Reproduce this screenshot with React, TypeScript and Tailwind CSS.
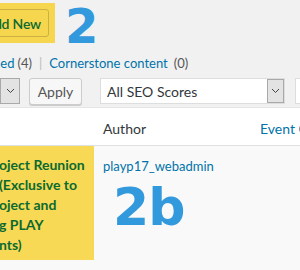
import React from "react";

const Chevron: React.FC = () => (
  <svg width="9" height="6" viewBox="0 0 9 6" fill="none">
    <path d="M1 1l3.5 3.5L8 1" stroke="#444" strokeWidth="1" />
  </svg>
);

const ArrowBox: React.FC<{ className?: string }> = ({ className }) => (
  <div
    className={
      "w-[17px] h-full bg-[#e3e3e3] border border-[#a9a9a9] flex items-center justify-center shrink-0 " +
      (className || "")
    }
  >
    <Chevron />
  </div>
);

const App: React.FC = () => {
  return (
    <div className="w-[300px] h-[270px] overflow-hidden bg-[#f1f1f1] font-['Lato',sans-serif] text-[#32373c]">
      {/* page title row */}
      <div className="flex items-start h-[46px]">
        <div className="mt-[3px] w-[55px] h-[40px] bg-[#f6d64e] flex items-center justify-end pr-[6px] overflow-hidden shrink-0">
          <div className="h-[28px] shrink-0 whitespace-nowrap border border-[#cdb042] rounded-[3px] pl-[8px] pr-[7px] flex items-center text-[14px] font-semibold text-[#0b6a30] tracking-[-0.2px]">
            Add New
          </div>
        </div>
        <div className="ml-[10px] mt-[2px] text-[48px] leading-none font-bold font-['DejaVu_Sans',sans-serif] text-[#3399dd] shrink-0">
          2
        </div>
      </div>

      {/* views */}
      <div className="h-[30px] flex items-center whitespace-nowrap text-[13px] pt-[6px]">
        <span className="text-[#0073aa] ml-[-41px] shrink-0">Published</span>
        <span className="text-[#555] ml-[3px] shrink-0">(4)</span>
        <span className="text-[#bbb] mx-[7px] shrink-0">|</span>
        <span className="text-[#0073aa] shrink-0">Cornerstone content</span>
        <span className="text-[#555] ml-[6px] shrink-0">(0)</span>
      </div>

      {/* filters */}
      <div className="h-[27px] flex items-stretch mt-[2px]">
        <div className="flex h-[26px] ml-[-40px] shrink-0">
          <div className="w-[40px] bg-white border border-[#ddd] border-r-0" />
          <ArrowBox className="w-[20px]" />
        </div>
        <div className="ml-[9px] w-[53px] h-[27px] shrink-0 bg-[#f7f7f7] border border-[#ccc] rounded-[3px] shadow-[0_1px_0_#ccc] flex items-center justify-center text-[14px] text-[#555]">
          Apply
        </div>
        <div className="ml-[18px] w-[185px] h-[26px] shrink-0 flex bg-white border border-[#ddd]">
          <div className="flex-1 flex items-center pl-[6px] text-[14px] text-[#32373c]">All SEO Scores</div>
          <ArrowBox />
        </div>
        <div className="ml-[10px] w-[20px] h-[26px] shrink-0 bg-white border border-[#ddd]" />
      </div>

      {/* table */}
      <div className="mt-[2px] border-t border-[#e5e5e5] bg-white">
        <div className="h-[38px] flex items-center pt-[4px] border-b border-[#e1e1e1] text-[14px] whitespace-nowrap">
          <div className="w-[103px] shrink-0" />
          <div className="w-[157px] shrink-0 text-[#32373c]">Author</div>
          <div className="text-[#0073aa] shrink-0">Event Category</div>
        </div>
        <div className="flex bg-[#f9f9f9] h-[125px]">
          <div className="w-[94px] h-[114px] bg-[#f7d955] shrink-0 overflow-hidden pt-[9px] text-[14px] leading-[20px] font-bold text-[#0b6a30] whitespace-nowrap">
            <div className="ml-[-1px]">oject Reunion</div>
            <div className="ml-[-1px]">(Exclusive to</div>
            <div className="ml-[-1px]">oject and</div>
            <div className="ml-[-1px]">g PLAY</div>
            <div className="ml-[-1px]">nts)</div>
          </div>
          <div className="pl-[9px] pt-[11px]">
            <div className="text-[13px] text-[#0073aa]">playp17_webadmin</div>
            <div className="ml-[10px] mt-[4px] text-[52px] leading-none font-bold font-['DejaVu_Sans',sans-serif] text-[#3399dd] tracking-[-1px]">
              2b
            </div>
          </div>
        </div>
      </div>
    </div>
  );
};

export default App;
